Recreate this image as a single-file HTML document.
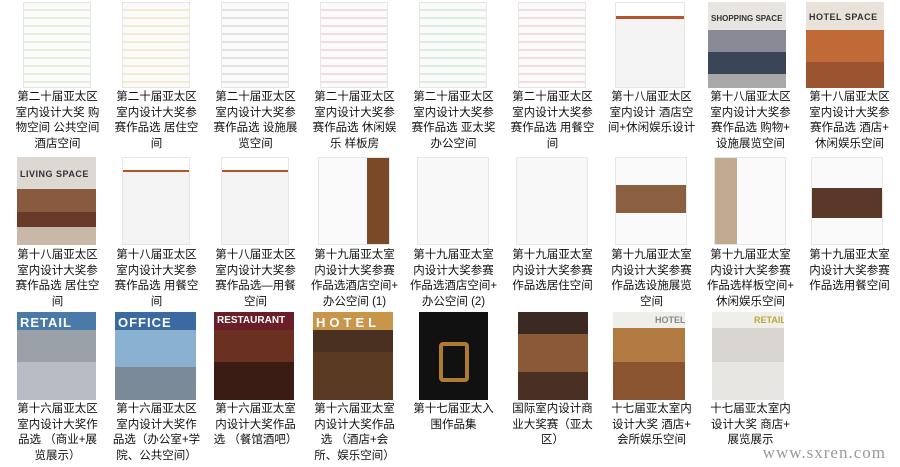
<!DOCTYPE html>
<html><head><meta charset="utf-8"><style>
*{margin:0;padding:0;box-sizing:border-box}
body{width:900px;height:467px;background:#fff;position:relative;overflow:hidden;font-family:"Liberation Sans","Noto Sans CJK SC","WenQuanYi Zen Hei",sans-serif}
.im{position:absolute;overflow:hidden}
.pg{background:#f7f7f7;border:1px solid #e6e6e6}
.cap{position:absolute;width:99px;text-align:center;font-size:11.5px;line-height:15.7px;color:#111;white-space:nowrap}
.t{position:absolute;color:#fff;font-weight:bold;font-size:11px;letter-spacing:1px;left:3px;top:3px;white-space:nowrap}
.wm{position:absolute;right:14px;bottom:4px;font-family:"Liberation Serif",serif;font-size:17px;color:#999;letter-spacing:1px}
</style></head><body>
<!-- row 1 -->
<div class="im pg" style="left:23px;top:2px;width:68px;height:86px;background:repeating-linear-gradient(#fbfbfb 0 6px,#e3f0d8 6px 8px)"></div>
<div class="im pg" style="left:122px;top:2px;width:68px;height:86px;background:repeating-linear-gradient(#fbfbfb 0 6px,#f5ecd0 6px 8px)"></div>
<div class="im pg" style="left:221px;top:2px;width:68px;height:86px;background:repeating-linear-gradient(#fbfbfb 0 6px,#e2e2e2 6px 8px)"></div>
<div class="im pg" style="left:320px;top:2px;width:68px;height:86px;background:repeating-linear-gradient(#fbfbfb 0 6px,#f0dce6 6px 8px)"></div>
<div class="im pg" style="left:419px;top:2px;width:68px;height:86px;background:repeating-linear-gradient(#fbfbfb 0 6px,#dcefdc 6px 8px)"></div>
<div class="im pg" style="left:518px;top:2px;width:68px;height:86px;background:repeating-linear-gradient(#fbfbfb 0 6px,#f3dede 6px 8px)"></div>
<div class="im pg" style="left:615px;top:2px;width:70px;height:86px;background:linear-gradient(#fff 0 13px,#b5542c 13px 16px,#f4f4f4 16px)"></div>
<div class="im" style="left:708px;top:2px;width:78px;height:86px;background:linear-gradient(#e8e4e0 0 28px,#8a8a96 28px 50px,#3a4658 50px 72px,#a8a8a8 72px)"><span class="t" style="color:#333;top:12px;font-size:8px;letter-spacing:0">SHOPPING SPACE</span></div>
<div class="im" style="left:806px;top:2px;width:78px;height:86px;background:linear-gradient(#e8e2da 0 28px,#c06a38 28px 60px,#9a5430 60px)"><span class="t" style="color:#333;top:10px;font-size:9px;letter-spacing:0.5px">HOTEL SPACE</span></div>
<div class="cap" style="left:8px;top:90px">第二十届亚太区<br>室内设计大奖 购<br>物空间 公共空间<br>酒店空间</div>
<div class="cap" style="left:107px;top:90px">第二十届亚太区<br>室内设计大奖参<br>赛作品选 居住空<br>间</div>
<div class="cap" style="left:206px;top:90px">第二十届亚太区<br>室内设计大奖参<br>赛作品选 设施展<br>览空间</div>
<div class="cap" style="left:305px;top:90px">第二十届亚太区<br>室内设计大奖参<br>赛作品选 休闲娱<br>乐 样板房</div>
<div class="cap" style="left:404px;top:90px">第二十届亚太区<br>室内设计大奖参<br>赛作品选 亚太奖<br>办公空间</div>
<div class="cap" style="left:503px;top:90px">第二十届亚太区<br>室内设计大奖参<br>赛作品选 用餐空<br>间</div>
<div class="cap" style="left:602px;top:90px">第十八届亚太区<br>室内设计 酒店空<br>间+休闲娱乐设计</div>
<div class="cap" style="left:701px;top:90px">第十八届亚太区<br>室内设计大奖参<br>赛作品选 购物+<br>设施展览空间</div>
<div class="cap" style="left:800px;top:90px">第十八届亚太区<br>室内设计大奖参<br>赛作品选 酒店+<br>休闲娱乐空间</div>
<!-- row 2 -->
<div class="im" style="left:17px;top:157px;width:79px;height:88px;background:linear-gradient(#ddd8d2 0 32px,#8a5a40 32px 55px,#6a3a28 55px 70px,#c8b8a8 70px)"><span class="t" style="color:#333;top:12px;font-size:9px;letter-spacing:0.5px">LIVING SPACE</span></div>
<div class="im pg" style="left:122px;top:157px;width:68px;height:88px;background:linear-gradient(#fff 0 12px,#b5542c 12px 14px,#f4f4f4 14px)"></div>
<div class="im pg" style="left:221px;top:157px;width:68px;height:88px;background:linear-gradient(#fff 0 12px,#b5542c 12px 14px,#f4f4f4 14px)"></div>
<div class="im pg" style="left:318px;top:157px;width:72px;height:88px;background:linear-gradient(90deg,#fafafa 0 48px,#7a4a28 48px)"></div>
<div class="im pg" style="left:417px;top:157px;width:72px;height:88px;background:#f8f8f8"></div>
<div class="im pg" style="left:516px;top:157px;width:72px;height:88px;background:#f8f8f8"></div>
<div class="im pg" style="left:615px;top:157px;width:72px;height:88px;background:linear-gradient(#fafafa 0 27px,#8a6040 27px 55px,#fafafa 55px)"></div>
<div class="im pg" style="left:714px;top:157px;width:72px;height:88px;background:linear-gradient(90deg,#c0aa90 0 22px,#fafafa 22px)"></div>
<div class="im pg" style="left:811px;top:157px;width:72px;height:88px;background:linear-gradient(#fafafa 0 30px,#5a3828 30px 60px,#fafafa 60px)"></div>
<div class="cap" style="left:8px;top:248px">第十八届亚太区<br>室内设计大奖参<br>赛作品选 居住空<br>间</div>
<div class="cap" style="left:107px;top:248px">第十八届亚太区<br>室内设计大奖参<br>赛作品选 用餐空<br>间</div>
<div class="cap" style="left:206px;top:248px">第十八届亚太区<br>室内设计大奖参<br>赛作品选—用餐<br>空间</div>
<div class="cap" style="left:305px;top:248px">第十九届亚太室<br>内设计大奖参赛<br>作品选酒店空间+<br>办公空间 (1)</div>
<div class="cap" style="left:404px;top:248px">第十九届亚太室<br>内设计大奖参赛<br>作品选酒店空间+<br>办公空间 (2)</div>
<div class="cap" style="left:503px;top:248px">第十九届亚太室<br>内设计大奖参赛<br>作品选居住空间</div>
<div class="cap" style="left:602px;top:248px">第十九届亚太室<br>内设计大奖参赛<br>作品选设施展览<br>空间</div>
<div class="cap" style="left:701px;top:248px">第十九届亚太室<br>内设计大奖参赛<br>作品选样板空间+<br>休闲娱乐空间</div>
<div class="cap" style="left:800px;top:248px">第十九届亚太室<br>内设计大奖参赛<br>作品选用餐空间</div>
<!-- row 3 -->
<div class="im" style="left:17px;top:312px;width:79px;height:88px;background:linear-gradient(#4a7aa8 0 18px,#9aa0a8 18px 50px,#b8bcc4 50px)"><span class="t" style="font-size:13px">RETAIL</span></div>
<div class="im" style="left:115px;top:312px;width:81px;height:88px;background:linear-gradient(#3a6aa0 0 18px,#8ab0d0 18px 55px,#7a8a98 55px)"><span class="t" style="font-size:13px">OFFICE</span></div>
<div class="im" style="left:214px;top:312px;width:80px;height:88px;background:linear-gradient(#6a1e28 0 18px,#6a3020 18px 50px,#3a1c14 50px)"><span class="t" style="font-size:10px;letter-spacing:0">RESTAURANT</span></div>
<div class="im" style="left:313px;top:312px;width:80px;height:88px;background:linear-gradient(#c8964a 0 18px,#4a3020 18px 40px,#5a3a22 40px)"><span class="t" style="font-size:13px;letter-spacing:4px">HOTEL</span></div>
<div class="im" style="left:419px;top:312px;width:69px;height:88px;background:#111"><div style="position:absolute;left:20px;top:30px;width:30px;height:40px;border:4px solid #b07a30;border-radius:4px"></div></div>
<div class="im" style="left:518px;top:312px;width:70px;height:88px;background:linear-gradient(#3a2a22 0 22px,#8a5a38 22px 60px,#4a3022 60px)"></div>
<div class="im" style="left:613px;top:312px;width:72px;height:88px;background:linear-gradient(#f0eee8 0 16px,#b07a40 16px 50px,#8a5430 50px)"><span class="t" style="color:#888;left:42px;font-size:9px;letter-spacing:0">HOTEL</span></div>
<div class="im" style="left:712px;top:312px;width:72px;height:88px;background:linear-gradient(#f0eee8 0 16px,#d8d4d0 16px 50px,#e8e6e2 50px)"><span class="t" style="color:#b8a840;left:42px;font-size:9px;letter-spacing:0">RETAIL</span></div>
<div class="cap" style="left:8px;top:402px">第十六届亚太区<br>室内设计大奖作<br>品选 （商业+展<br>览展示）</div>
<div class="cap" style="left:107px;top:402px">第十六届亚太区<br>室内设计大奖作<br>品选（办公室+学<br>院、公共空间）</div>
<div class="cap" style="left:206px;top:402px">第十六届亚太室<br>内设计大奖作品<br>选 （餐馆酒吧）</div>
<div class="cap" style="left:305px;top:402px">第十六届亚太室<br>内设计大奖作品<br>选 （酒店+会<br>所、娱乐空间）</div>
<div class="cap" style="left:404px;top:402px">第十七届亚太入<br>围作品集</div>
<div class="cap" style="left:503px;top:402px">国际室内设计商<br>业大奖赛（亚太<br>区）</div>
<div class="cap" style="left:602px;top:402px">十七届亚太室内<br>设计大奖 酒店+<br>会所娱乐空间</div>
<div class="cap" style="left:701px;top:402px">十七届亚太室内<br>设计大奖 商店+<br>展览展示</div>
<div class="wm">www.sxren.com</div>
</body></html>
